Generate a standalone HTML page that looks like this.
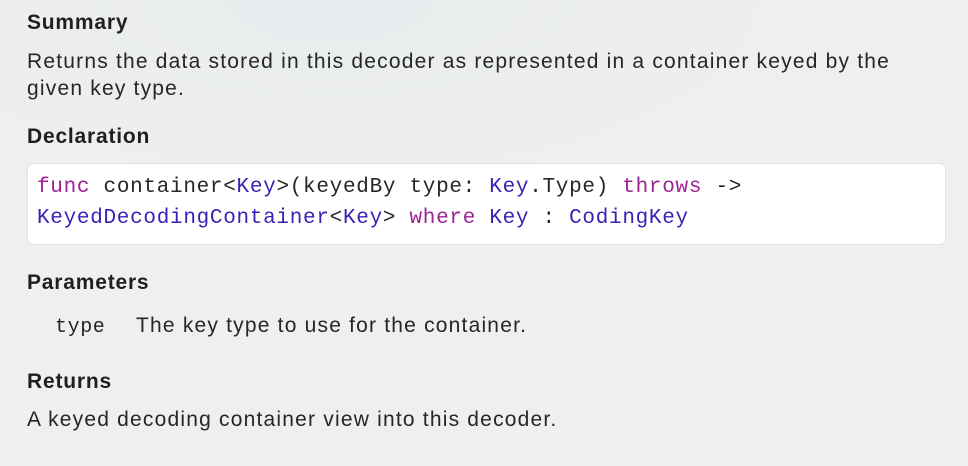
<!DOCTYPE html>
<html><head><style>
html,body{margin:0;padding:0}
body{width:968px;height:466px;overflow:hidden;background:#efefef;background:radial-gradient(ellipse 500px 200px at 330px 0px,#e8ecee,#efefef);font-family:"Liberation Sans",sans-serif;color:#262626;position:relative}
.a{position:absolute;white-space:nowrap}
h{position:absolute;font-weight:bold;font-size:21px;letter-spacing:0.8px;color:#1f1f1f}
.t{font-size:21px;letter-spacing:1.2px;line-height:27px}
.code{position:absolute;left:27px;top:163px;width:917px;height:80px;background:#fff;border:1px solid #e2e2e2;border-radius:6px}
.m{font-family:"Liberation Mono",monospace;font-size:21px;letter-spacing:0.7px;color:#262626;line-height:31px}
.k{color:#9b2393}.ty{color:#3b1fb5}
</style></head><body>
<h style="left:27px;top:11px">Summary</h>
<div class="a t" style="left:27px;top:48px">Returns the data stored in this decoder as represented in a container keyed by the<br>given key type.</div>
<h style="left:27px;top:125px">Declaration</h>
<div class="code"></div>
<div class="a m" style="left:37px;top:172px"><span class="k">func</span> container&lt;<span class="ty">Key</span>&gt;(keyedBy type: <span class="ty">Key</span>.Type) <span class="k">throws</span> -&gt;<br><span class="ty">KeyedDecodingContainer</span>&lt;<span class="ty">Key</span>&gt; <span class="k">where</span> <span class="ty">Key</span> : <span class="ty">CodingKey</span></div>
<h style="left:27px;top:271px">Parameters</h>
<div class="a m" style="left:55px;top:312px;font-size:20px;letter-spacing:0.6px">type</div>
<div class="a t" style="left:136px;top:312px">The key type to use for the container.</div>
<h style="left:27px;top:370px">Returns</h>
<div class="a t" style="left:27px;top:406px">A keyed decoding container view into this decoder.</div>
</body></html>
